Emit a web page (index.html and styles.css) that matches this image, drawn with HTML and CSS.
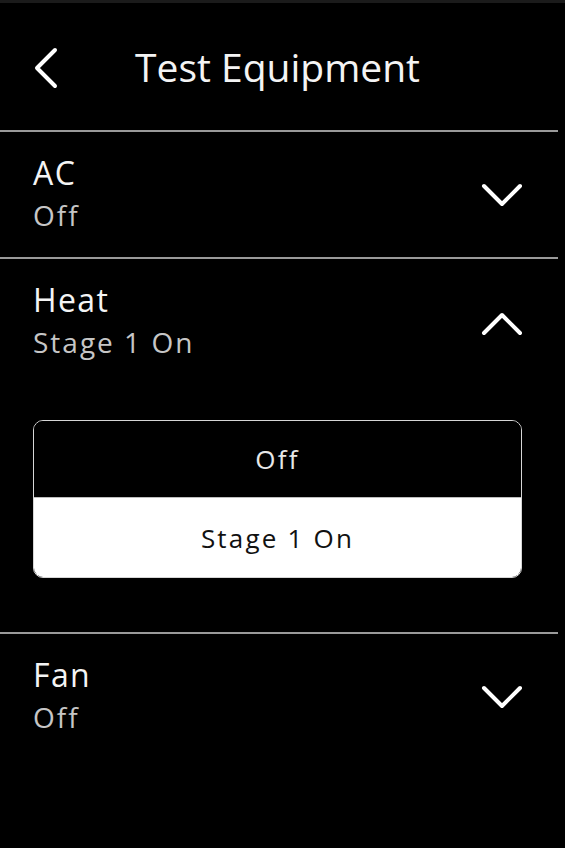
FILE: index.html
```html
<!DOCTYPE html>
<html>
<head>
<meta charset="utf-8">
<link rel="stylesheet" href="styles.css">
</head>
<body>
<div class="screen">
  <header class="header">
    <svg class="back" width="26" height="42" viewBox="0 0 26 42"><path d="M22 3 L4 21 L22 39" fill="none" stroke="#fff" stroke-width="4" stroke-linecap="round" stroke-linejoin="round"/></svg>
    <h1 class="title">Test Equipment</h1>
  </header>

  <section class="item">
    <div class="row">
      <div class="texts">
        <div class="label">AC</div>
        <div class="value">Off</div>
      </div>
      <svg class="chev" width="42" height="26" viewBox="0 0 42 26"><path d="M3 3 L21 21 L39 3" fill="none" stroke="#fff" stroke-width="4" stroke-linecap="round" stroke-linejoin="round"/></svg>
    </div>
  </section>

  <section class="item">
    <div class="row">
      <div class="texts">
        <div class="label">Heat</div>
        <div class="value">Stage 1 On</div>
      </div>
      <svg class="chev" width="42" height="26" viewBox="0 0 42 26"><path d="M3 23 L21 5 L39 23" fill="none" stroke="#fff" stroke-width="4" stroke-linecap="round" stroke-linejoin="round"/></svg>
    </div>
    <div class="options">
      <div class="option">Off</div>
      <div class="option selected">Stage 1 On</div>
    </div>
  </section>

  <section class="item last">
    <div class="row">
      <div class="texts">
        <div class="label">Fan</div>
        <div class="value">Off</div>
      </div>
      <svg class="chev" width="42" height="26" viewBox="0 0 42 26"><path d="M3 3 L21 21 L39 3" fill="none" stroke="#fff" stroke-width="4" stroke-linecap="round" stroke-linejoin="round"/></svg>
    </div>
  </section>
</div>
</body>
</html>
```
FILE: styles.css
```css
html, body {
  margin: 0;
  padding: 0;
  background: #000;
}
body {
  font-family: "Open Sans", "DejaVu Sans", sans-serif;
  color: #f2f2f2;
  width: 565px;
  height: 848px;
  overflow: hidden;
  border-top: 3px solid #1b1b1b;
  box-sizing: border-box;
}
.screen {
  width: 558px;
}
.header {
  height: 127px;
  display: flex;
  align-items: center;
  border-bottom: 2px solid #9a9a9a;
  box-sizing: content-box;
}
.back {
  margin-left: 33px;
  margin-top: 2px;
  flex: none;
}
.title {
  margin: 0 0 0 76px;
  font-size: 39px;
  font-weight: 400;
  line-height: 40px;
  color: #f4f4f4;
  letter-spacing: 0;
}
.item {
  border-bottom: 2px solid #9a9a9a;
}
.item.last {
  border-bottom: none;
}
.row {
  height: 125px;
  display: flex;
  align-items: center;
  justify-content: space-between;
  padding: 0 35px 0 33px;
}
.texts {
  display: flex;
  flex-direction: column;
}
.label {
  font-size: 32px;
  line-height: 40px;
  color: #f4f4f4;
  letter-spacing: 1.4px;
}
.value {
  font-size: 28px;
  line-height: 44px;
  color: #c6c6c6;
  letter-spacing: 2px;
}
.chev {
  flex: none;
  margin-top: 2px;
}
.options {
  margin: 36px 36px 54px 33px;
  border: 1.5px solid #d6d6d6;
  border-radius: 10px;
  overflow: hidden;
}
.option {
  height: 76px;
  display: flex;
  align-items: center;
  justify-content: center;
  font-size: 26px;
  color: #e8e8e8;
  background: #000;
  letter-spacing: 2.2px;
}
.option.selected {
  height: 79px;
  background: #fff;
  color: #111;
  border-top: 1.5px solid #bdbdbd;
}
```
